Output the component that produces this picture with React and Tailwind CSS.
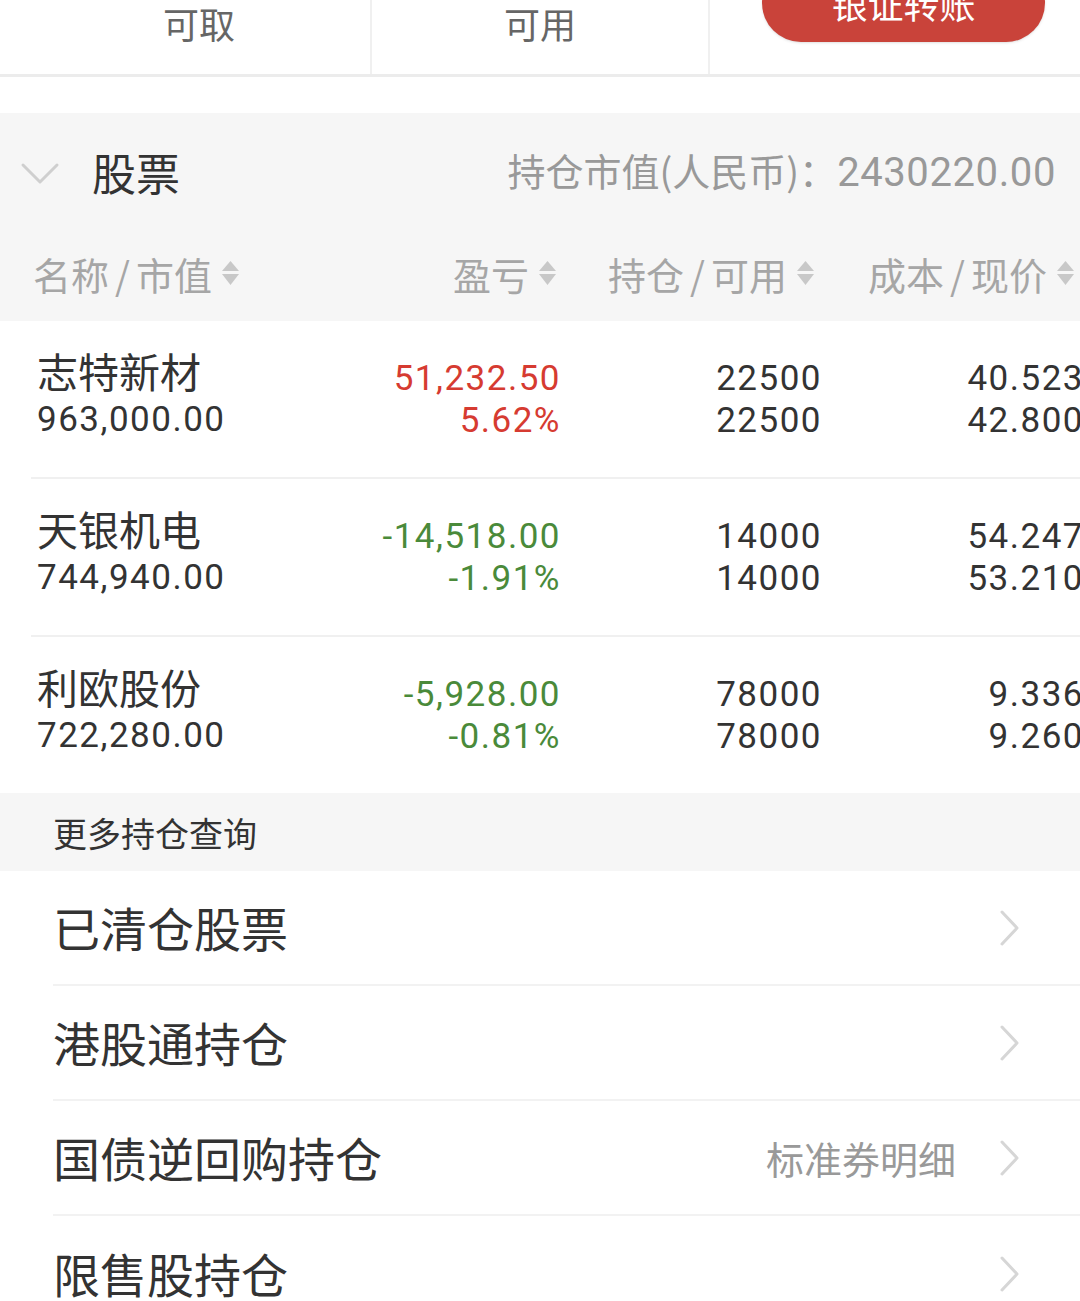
import React from "react";

const cjk = { fontFamily: '"Noto Sans CJK SC", "Noto Sans", sans-serif' };
const num = { fontFamily: 'Roboto, "Noto Sans CJK SC", sans-serif' };

const stocks = [
  { name: "志特新材", value: "963,000.00", pnl: "51,232.50", pct: "5.62%", hold: "22500", avail: "22500", cost: "40.523", price: "42.800", up: true },
  { name: "天银机电", value: "744,940.00", pnl: "-14,518.00", pct: "-1.91%", hold: "14000", avail: "14000", cost: "54.247", price: "53.210", up: false },
  { name: "利欧股份", value: "722,280.00", pnl: "-5,928.00", pct: "-0.81%", hold: "78000", avail: "78000", cost: "9.336", price: "9.260", up: false },
];

const links = [
  { label: "已清仓股票" },
  { label: "港股通持仓" },
  { label: "国债逆回购持仓", extra: "标准券明细" },
  { label: "限售股持仓" },
];

const SortIcon = () => (
  <svg width="19" height="26" viewBox="0 0 19 26" className="ml-[9px] shrink-0">
    <path d="M9.5 1 L18 11 L1 11 Z" fill="#c8c8c8" />
    <path d="M9.5 25 L18 14 L1 14 Z" fill="#c8c8c8" />
  </svg>
);

const Chevron = () => (
  <svg width="24" height="38" viewBox="0 0 24 38" className="shrink-0">
    <path d="M4 3 L19 19 L4 35" fill="none" stroke="#d6d6d6" strokeWidth="3" strokeLinecap="round" strokeLinejoin="round" />
  </svg>
);

const HeadCell = ({ children, className = "" }) => (
  <div className={`flex items-center text-[38px] text-[#a6a6a6] ${className}`}>
    <span>{children}</span>
    <SortIcon />
  </div>
);

export default function App() {
  return (
    <div className="w-[1080px] h-[1301px] overflow-hidden bg-white text-[#333]" style={cjk}>
      {/* top summary strip */}
      <div className="flex h-[77px] border-b-[3px] border-[#ececec]">
        <div className="w-[372px] flex justify-center pl-[28px] text-[36px] text-[#666] leading-[46px] border-r-2 border-[#f0f0f0]">
          可取
        </div>
        <div className="w-[338px] flex justify-center text-[36px] text-[#666] leading-[46px] border-r-2 border-[#f0f0f0]">
          可用
        </div>
        <div className="flex-1 pl-[52px]">
          <button className="w-[283px] h-[78px] mt-[-42px] rounded-[39px] bg-[#c9433a] text-white text-[36px] leading-[70px] shadow-sm">
            银证转账
          </button>
        </div>
      </div>

      <div className="h-[36px]" />

      {/* stock section header */}
      <div className="bg-[#f6f6f6] h-[208px]">
        <div className="flex items-center h-[118px] pl-[20px] pr-[24px]">
          <svg width="40" height="26" viewBox="0 0 40 26" className="mt-[4px]">
            <path d="M3 4 L20 21 L37 4" fill="none" stroke="#cfcfcf" strokeWidth="3" strokeLinecap="round" strokeLinejoin="round" />
          </svg>
          <span className="ml-[32px] text-[44px] text-[#333]">股票</span>
          <span className="ml-auto text-[38px] text-[#999]">
            持仓市值(人民币)：<span style={num} className="text-[40px] tracking-[0.6px]">2430220.00</span>
          </span>
        </div>
        <div className="grid grid-cols-[327px_197px_261px_260px] pl-[33px] h-[90px] items-center pb-[6px]">
          <HeadCell>
            名称<span className="mx-[6px]">/</span>市值
          </HeadCell>
          <HeadCell className="justify-end">盈亏</HeadCell>
          <HeadCell className="justify-end pr-[3px]">
            持仓<span className="mx-[6px]">/</span>可用
          </HeadCell>
          <HeadCell className="justify-end pr-[3px]">
            成本<span className="mx-[6px]">/</span>现价
          </HeadCell>
        </div>
      </div>

      {/* stock rows */}
      <div>
        {stocks.map((s, i) => (
          <div key={s.name} className={`ml-[31px] ${i < stocks.length - 1 ? "border-b-2 border-[#f0f0f0]" : ""}`}>
            <div className="grid grid-cols-[327px_197px_261px_262px] pl-[6px] h-[156px] items-center">
              <div className="mt-[-9px]">
                <div className="text-[41px] leading-[44px] text-[#333] mb-[7px]">{s.name}</div>
                <div style={num} className="text-[35px] leading-[42px] tracking-[1.5px] text-[#333]">{s.value}</div>
              </div>
              <div style={num} className={`text-right text-[35px] leading-[42px] tracking-[1.5px] pt-[2px] ${s.up ? "text-[#d63b31]" : "text-[#4a8a3a]"}`}>
                <div>{s.pnl}</div>
                <div>{s.pct}</div>
              </div>
              <div style={num} className="text-right text-[35px] leading-[42px] tracking-[1.5px] pt-[2px] text-[#333]">
                <div>{s.hold}</div>
                <div>{s.avail}</div>
              </div>
              <div style={num} className="text-right text-[35px] leading-[42px] tracking-[1.5px] pt-[2px] text-[#333]">
                <div>{s.cost}</div>
                <div>{s.price}</div>
              </div>
            </div>
          </div>
        ))}
      </div>

      {/* more queries */}
      <div className="bg-[#f6f6f6] h-[78px] flex items-center pl-[53px] text-[34px] text-[#333]">
        更多持仓查询
      </div>

      <div>
        {links.map((l, i) => (
          <div key={l.label} className={`ml-[53px] h-[115px] flex items-center pr-[58px] ${i < links.length - 1 ? "border-b-2 border-[#f2f2f2]" : ""}`}>
            <span className="text-[47px] text-[#333]">{l.label}</span>
            {l.extra && <span className="ml-auto mr-[42px] text-[38px] text-[#999]">{l.extra}</span>}
            <span className={l.extra ? "" : "ml-auto"}>
              <Chevron />
            </span>
          </div>
        ))}
      </div>
    </div>
  );
}
